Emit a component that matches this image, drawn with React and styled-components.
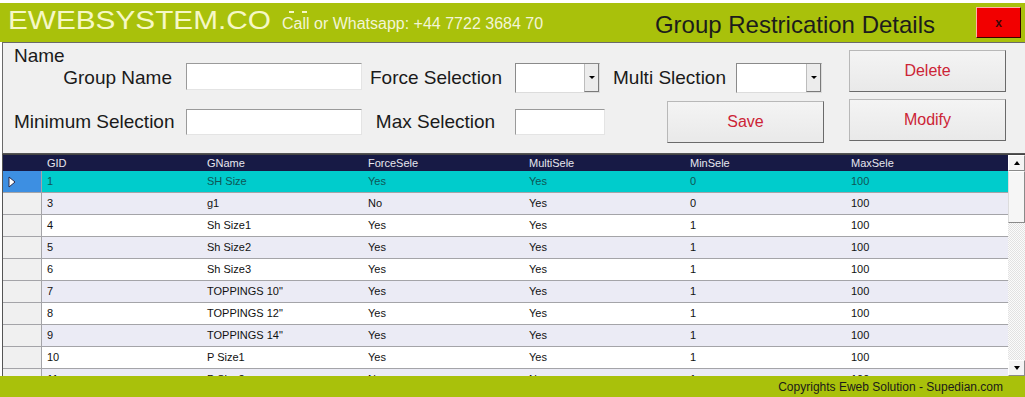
import React from 'react';
import styled, { createGlobalStyle } from 'styled-components';

const GREEN = '#a9c10b';

const rows = [
  ['1', 'SH Size', 'Yes', 'Yes', '0', '100'],
  ['3', 'g1', 'No', 'Yes', '0', '100'],
  ['4', 'Sh Size1', 'Yes', 'Yes', '1', '100'],
  ['5', 'Sh Size2', 'Yes', 'Yes', '1', '100'],
  ['6', 'Sh Size3', 'Yes', 'Yes', '1', '100'],
  ['7', 'TOPPINGS 10"', 'Yes', 'Yes', '1', '100'],
  ['8', 'TOPPINGS 12"', 'Yes', 'Yes', '1', '100'],
  ['9', 'TOPPINGS 14"', 'Yes', 'Yes', '1', '100'],
  ['10', 'P Size1', 'Yes', 'Yes', '1', '100'],
  ['11', 'P Size2', 'No', 'No', '1', '100'],
];

const columns = ['GID', 'GName', 'ForceSele', 'MultiSele', 'MinSele', 'MaxSele'];

const Global = createGlobalStyle`
  body {
    margin: 0;
    background: #fff;
    font-family: "Liberation Sans", Arial, sans-serif;
  }
`;

const Window = styled.div`
  width: 1025px;
  height: 397px;
  padding-top: 3px;
  box-sizing: border-box;
  display: flex;
  flex-direction: column;
  overflow: hidden;
`;

const TitleBar = styled.div`
  height: 39px;
  background: ${GREEN};
  display: flex;
  align-items: center;
  padding-left: 8px;
  flex-shrink: 0;
`;

const LogoBox = styled.div`
  width: 274px;
  align-self: flex-start;
  margin-top: 5px;
  flex-shrink: 0;
  position: relative;
  /* the clipped top of the last letter peeking out behind the phone number */
  &::after {
    content: '';
    position: absolute;
    top: 3px;
    left: 281px;
    width: 18px;
    height: 3px;
    border-left: 5px solid #f6f8c6;
    border-right: 5px solid #f6f8c6;
    box-sizing: border-box;
  }
`;

const Logo = styled.div`
  font-size: 25px;
  line-height: 25px;
  color: #f6f8c6;
  white-space: nowrap;
  transform: scaleX(1.19);
  transform-origin: left center;
`;

const CallText = styled.div`
  position: relative;
  z-index: 1;
  align-self: stretch;
  margin-top: 10px;
  padding-bottom: 7px;
  display: flex;
  align-items: center;
  background: ${GREEN};
  color: #f3f5d6;
  font-size: 16px;
  white-space: nowrap;
`;

const Heading = styled.div`
  margin-left: auto;
  padding-top: 4px;
  font-size: 24px;
  color: #1c1c1c;
  white-space: nowrap;
`;

const CloseButton = styled.div`
  width: 45px;
  height: 31px;
  margin: 0 4px 0 41px;
  box-sizing: border-box;
  background: #f20000;
  border: 1px solid;
  border-color: #ffb0a8 #3a0000 #3a0000 #ffb0a8;
  display: flex;
  align-items: center;
  justify-content: center;
  color: #3a0808;
  font-size: 12px;
  font-weight: bold;
`;

const Panel = styled.div`
  margin-left: 2px;
  height: 112px;
  box-sizing: border-box;
  background: #f0f0f0;
  border-top: 1px solid #6a6a6a;
  border-left: 1px solid #6a6a6a;
  border-bottom: 1px solid #555;
  display: flex;
  padding-left: 11px;
  flex-shrink: 0;
`;

const FormBlock = styled.div`
  padding-top: 5px;
`;

const NameCaption = styled.div`
  height: 15px;
  line-height: 15px;
  font-size: 19px;
  color: #1a1a1a;
`;

const FormGrid = styled.div`
  display: grid;
  grid-template-columns: 164px 176px 137px 90px 226px;
  grid-template-rows: 30px 42px;
  column-gap: 8px;
  row-gap: 8px;
  align-items: center;
`;

const Label = styled.div`
  font-size: 19px;
  color: #1a1a1a;
  white-space: nowrap;
  text-align: ${(p) => p.align || 'left'};
  padding-right: ${(p) => p.pr || 0}px;
`;

const TextBox = styled.div`
  width: ${(p) => p.w}px;
  height: ${(p) => p.h}px;
  box-sizing: border-box;
  background: #fff;
  border: 1px solid;
  border-color: #9a9a9a #e4e4e4 #e4e4e4 #9a9a9a;
  align-self: ${(p) => p.self || 'center'};
`;

const Combo = styled.div`
  width: ${(p) => p.w}px;
  height: 30px;
  box-sizing: border-box;
  background: #fff;
  border: 1px solid;
  border-color: #8a8a8a #dcdcdc #dcdcdc #8a8a8a;
  display: flex;
  justify-content: flex-end;
`;

const ComboArrow = styled.div`
  width: 15px;
  box-sizing: border-box;
  background: #ececec;
  border-left: 1px solid #bdbdbd;
  border-right: 1px solid #7a7a7a;
  border-bottom: 1px solid #7a7a7a;
  display: flex;
  align-items: center;
  justify-content: center;
  &::after {
    content: '';
    border-left: 3px solid transparent;
    border-right: 3px solid transparent;
    border-top: 3px solid #000;
  }
`;

const MultiCell = styled.div`
  display: flex;
  align-items: center;
  gap: 10px;
`;

const PushButton = styled.div`
  width: 157px;
  height: 42px;
  box-sizing: border-box;
  margin-left: ${(p) => p.ml || 0}px;
  background: linear-gradient(#f4f4f4, #e9e9e9);
  border: 1px solid;
  border-color: #b8b8b8 #6a6a6a #6a6a6a #b8b8b8;
  display: flex;
  align-items: center;
  justify-content: center;
  color: #cc2436;
  font-size: 16px;
`;

const ButtonColumn = styled.div`
  margin-left: 10px;
  padding-top: 7px;
  display: flex;
  flex-direction: column;
  gap: 7px;
`;

const GridBox = styled.div`
  margin-left: 2px;
  height: 222px;
  box-sizing: border-box;
  border-left: 1px solid #555;
  border-top: 1px solid #444;
  display: flex;
  background: #fff;
  flex-shrink: 0;
`;

const Table = styled.div`
  flex: 1;
  overflow: hidden;
`;

const Row = styled.div`
  display: grid;
  grid-template-columns: 39px 160px repeat(4, 161px) 1fr;
  height: ${(p) => (p.head ? 16 : 22)}px;
  box-sizing: border-box;
  background: ${(p) => (p.head ? '#171a45' : p.selected ? '#00cccc' : p.alt ? '#ebebf5' : '#fff')};
  border-bottom: ${(p) => (p.head ? 'none' : '1px solid #a4a4a8')};
  color: ${(p) => (p.head ? '#e6e6ee' : p.selected ? '#0e5656' : '#111')};
  font-size: 11px;
`;

const Cell = styled.div`
  padding-left: 5px;
  padding-bottom: ${(p) => (p.head ? 0 : 1)}px;
  display: flex;
  align-items: center;
  white-space: nowrap;
  overflow: hidden;
`;

const RowHead = styled.div`
  background: ${(p) => (p.head ? 'transparent' : p.selected ? '#3d8fe2' : '#f0f0f0')};
  border-right: ${(p) => (p.head ? 'none' : '1px solid #a4a4a8')};
  display: flex;
  align-items: center;
  padding-left: 5px;
`;

const ScrollBar = styled.div`
  width: 17px;
  display: flex;
  flex-direction: column;
  background: repeating-conic-gradient(#e2e2e2 0 25%, #fbfbfb 0 50%) 0 0 / 2px 2px;
`;

const ScrollBtn = styled.div`
  height: 16px;
  box-sizing: border-box;
  background: #f4f4f4;
  border: 1px solid;
  border-color: #fff #8a8a8a #8a8a8a #fff;
  display: flex;
  align-items: center;
  justify-content: center;
  margin-top: ${(p) => (p.down ? 'auto' : 0)};
  &::after {
    content: '';
    border-left: 3px solid transparent;
    border-right: 3px solid transparent;
    ${(p) => (p.down ? 'border-top: 4px solid #000;' : 'border-bottom: 4px solid #000;')}
  }
`;

const Thumb = styled.div`
  height: 52px;
  box-sizing: border-box;
  background: #f6f6f6;
  border: 1px solid;
  border-color: #fff #8a8a8a #8a8a8a #dcdcdc;
`;

const Footer = styled.div`
  flex: 1;
  background: ${GREEN};
  display: flex;
  align-items: center;
  justify-content: flex-end;
  padding-right: 22px;
  font-size: 12px;
  color: #1a1a1a;
`;

const Pointer = () => (
  <svg width="8" height="12" viewBox="0 0 8 12">
    <polygon points="1,1 7,6 1,11" fill="#fff" stroke="#2a2a4a" strokeWidth="1" />
  </svg>
);

export default function App() {
  return (
    <Window>
      <Global />
      <TitleBar>
        <LogoBox>
          <Logo>EWEBSYSTEM.CO</Logo>
        </LogoBox>
        <CallText>Call or Whatsapp: +44 7722 3684 70</CallText>
        <Heading>Group Restrication Details</Heading>
        <CloseButton>x</CloseButton>
      </TitleBar>

      <Panel>
        <FormBlock>
          <NameCaption>Name</NameCaption>
          <FormGrid>
            <Label align="right" pr={6}>Group Name</Label>
            <TextBox w={176} h={27} self="start" />
            <Label>Force Selection</Label>
            <Combo w={85}>
              <ComboArrow />
            </Combo>
            <MultiCell>
              <Label>Multi Slection</Label>
              <Combo w={86}>
                <ComboArrow />
              </Combo>
            </MultiCell>

            <Label>Minimum Selection</Label>
            <TextBox w={176} h={26} />
            <Label align="center" pr={6}>Max Selection</Label>
            <TextBox w={90} h={26} />
            <PushButton ml={54}>Save</PushButton>
          </FormGrid>
        </FormBlock>
        <ButtonColumn>
          <PushButton>Delete</PushButton>
          <PushButton>Modify</PushButton>
        </ButtonColumn>
      </Panel>

      <GridBox>
        <Table>
          <Row head>
            <RowHead head />
            {columns.map((c) => (
              <Cell head key={c}>{c}</Cell>
            ))}
          </Row>
          {rows.map((r, i) => (
            <Row key={r[0]} selected={i === 0} alt={i % 2 === 1}>
              <RowHead selected={i === 0}>{i === 0 && <Pointer />}</RowHead>
              {r.map((v, j) => (
                <Cell key={j}>{v}</Cell>
              ))}
            </Row>
          ))}
        </Table>
        <ScrollBar>
          <ScrollBtn />
          <Thumb />
          <ScrollBtn down />
        </ScrollBar>
      </GridBox>

      <Footer>Copyrights Eweb Solution - Supedian.com</Footer>
    </Window>
  );
}
